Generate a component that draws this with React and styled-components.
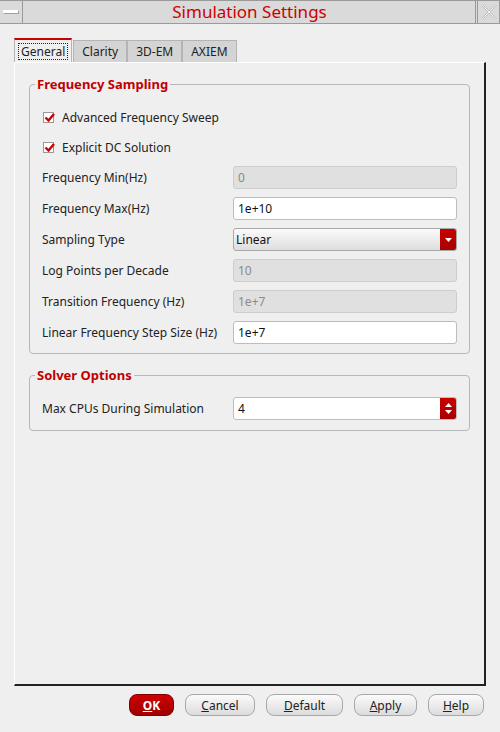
import styled, { createGlobalStyle } from "styled-components"

const Global = createGlobalStyle`
  html, body { margin: 0; padding: 0; background: #efefef; }
  body { font-family: "Noto Sans", "DejaVu Sans", sans-serif; font-size: 12px; color: #222; }
  * { box-sizing: border-box; }
`

const Window = styled.div`
  width: 500px;
  height: 732px;
  display: flex;
  flex-direction: column;
  background: #efefef;
`

const TitleBar = styled.div`
  display: flex;
  height: 24px;
  border-top: 1px solid #9a9a9a;
  border-bottom: 1px solid #9a9a9a;
  background: #dadada;
`

const TitleButton = styled.div`
  width: 23px;
  display: flex;
  align-items: center;
  justify-content: center;
  border-right: 1px solid #9a9a9a;
  border-left: ${p => p.$right ? "1px solid #9a9a9a" : "none"};
  margin-left: ${p => p.$right ? "1px" : "0"};
`

const Minimize = styled.div`
  width: 16px;
  height: 4px;
  background: #fff;
  border: 1px solid #a0a0a0;
  border-top-color: #fff;
  border-left-color: #fff;
`

const Title = styled.div`
  flex: 1;
  text-align: center;
  color: #cc0000;
  font-size: 17px;
  line-height: 22px;
  margin-left: 1px;
  border-right: 1px solid #9a9a9a;
`

const Tabs = styled.div`
  display: flex;
  margin: 14px 0 0 14px;
  height: 24px;
  align-items: flex-end;
`

const Tab = styled.div`
  height: ${p => p.$active ? "24px" : "22px"};
  padding: 0 ${p => p.$active ? "3px" : "5px"};
  margin-right: ${p => p.$active ? "1px" : "0"};
  display: flex;
  align-items: center;
  background: ${p => p.$active ? "#efefef" : "#d4d4d4"};
  border: 1px solid #b4b4b4;
  border-bottom: none;
  border-top: ${p => p.$active ? "2px solid #cc0000" : "1px solid #b4b4b4"};
  font-size: 12px;
  span {
    padding: 0 2px;
    border: ${p => p.$active ? "1px dotted #222" : "1px solid transparent"};
    line-height: 15px;
  }
`

const Panel = styled.div`
  margin: 0 14px 0 14px;
  height: 624px;
  border-top: 1px solid #fff;
  border-left: 1px solid #fff;
  border-right: 2px solid #222;
  border-bottom: 2px solid #222;
  padding: 14px 14px 0 14px;
  display: flex;
  flex-direction: column;
  gap: 14px;
`

const Group = styled.fieldset`
  margin: 0;
  border: 1px solid #b8b8b8;
  border-radius: 4px;
  padding: ${p => p.$pad || "2px 12px 5px 12px"};
  display: flex;
  flex-direction: column;
  legend {
    color: #c00000;
    font-weight: bold;
    font-size: 13px;
    padding: 0 2px;
    margin-left: -7px;
    line-height: 14px;
  }
`

const CheckRow = styled.div`
  display: flex;
  align-items: center;
  height: 30px;
  padding-left: 1px;
  margin-top: ${p => p.$first ? "9px" : "0"};
`

const Check = styled.div`
  width: 11px;
  height: 11px;
  background: #fff;
  border: 1px solid #999;
  margin-right: 8px;
  position: relative;
  svg { position: absolute; left: -1px; top: -2px; }
`

const Row = styled.div`
  display: flex;
  align-items: center;
  height: 31px;
`

const Label = styled.div`
  width: 191px;
`

const Field = styled.div`
  flex: 1;
  height: 23px;
  border: 1px solid ${p => p.$disabled ? "#cdcdcd" : "#bdbdbd"};
  border-radius: 3px;
  background: ${p => p.$disabled ? "#e0e0e0" : "#fff"};
  color: ${p => p.$disabled ? "#8a8a8a" : "#111"};
  display: flex;
  align-items: center;
  padding-left: 4px;
  position: relative;
  overflow: hidden;
`

const Select = styled(Field)`
  background: linear-gradient(#fafafa, #dedede);
  border-color: #a8a8a8;
  padding-left: 2px;
`

const RedKnob = styled.div`
  position: absolute;
  right: 0;
  top: 0;
  bottom: 0;
  width: 16px;
  background: linear-gradient(#c80000, #a80000);
  display: flex;
  flex-direction: column;
  align-items: center;
  justify-content: center;
  gap: 3px;
`

const Buttons = styled.div`
  display: flex;
  justify-content: flex-end;
  gap: 11px;
  padding: 8px 16px 0 0;
`

const Button = styled.button`
  height: 22px;
  width: ${p => p.$w}px;
  border-radius: 8px;
  font-family: "Noto Sans", "DejaVu Sans", sans-serif;
  font-size: 12px;
  padding: 0;
  border: 1px solid ${p => p.$primary ? "#800000" : "#a8a8a8"};
  background: ${p => p.$primary ? "linear-gradient(#d00000, #a00000)" : "linear-gradient(#fbfbfb, #dcdcdc)"};
  color: ${p => p.$primary ? "#fff" : "#222"};
  font-weight: ${p => p.$primary ? "bold" : "normal"};
  u { text-decoration: underline; }
`

function Tick() {
  return (
    <svg width="13" height="13" viewBox="0 0 13 13">
      <path d="M2.5 6.5 L5.5 9.5 L11 3" stroke="#cc0000" strokeWidth="2.4" fill="none" />
    </svg>
  )
}

function Arrow({ up }) {
  return (
    <svg width="7" height="4" viewBox="0 0 7 4">
      <path d={up ? "M0 4 L3.5 0 L7 4 Z" : "M0 0 L7 0 L3.5 4 Z"} fill="#fff" />
    </svg>
  )
}

const rows = [
  { label: "Frequency Min(Hz)", value: "0", disabled: true },
  { label: "Frequency Max(Hz)", value: "1e+10" },
  { label: "Sampling Type", value: "Linear", select: true },
  { label: "Log Points per Decade", value: "10", disabled: true },
  { label: "Transition Frequency (Hz)", value: "1e+7", disabled: true },
  { label: "Linear Frequency Step Size (Hz)", value: "1e+7" },
]

export default function App() {
  return (
    <Window>
      <Global />
      <TitleBar>
        <TitleButton><Minimize /></TitleButton>
        <Title>Simulation Settings</Title>
        <TitleButton $right>
          <svg width="16" height="16" viewBox="0 0 16 16">
            <path d="M1 1 L15 15 M15 1 L1 15" stroke="#bdbdbd" strokeWidth="2" />
            <path d="M1 1 L15 15 M15 1 L1 15" stroke="#fff" strokeWidth="0.8" />
          </svg>
        </TitleButton>
      </TitleBar>
      <Tabs>
        <Tab $active><span>General</span></Tab>
        <Tab><span>Clarity</span></Tab>
        <Tab><span>3D-EM</span></Tab>
        <Tab><span>AXIEM</span></Tab>
      </Tabs>
      <Panel>
        <Group>
          <legend>Frequency Sampling</legend>
          <CheckRow $first><Check><Tick /></Check>Advanced Frequency Sweep</CheckRow>
          <CheckRow><Check><Tick /></Check>Explicit DC Solution</CheckRow>
          {rows.map(r => (
            <Row key={r.label}>
              <Label>{r.label}</Label>
              {r.select ? (
                <Select>{r.value}<RedKnob><Arrow /></RedKnob></Select>
              ) : (
                <Field $disabled={r.disabled}>{r.value}</Field>
              )}
            </Row>
          ))}
        </Group>
        <Group $pad="11px 12px 6px 12px">
          <legend>Solver Options</legend>
          <Row>
            <Label>Max CPUs During Simulation</Label>
            <Field>4<RedKnob><Arrow up /><Arrow /></RedKnob></Field>
          </Row>
        </Group>
      </Panel>
      <Buttons>
        <Button $primary $w={45}><u>O</u>K</Button>
        <Button $w={70}><u>C</u>ancel</Button>
        <Button $w={77}><u>D</u>efault</Button>
        <Button $w={63}><u>A</u>pply</Button>
        <Button $w={56}><u>H</u>elp</Button>
      </Buttons>
    </Window>
  )
}
